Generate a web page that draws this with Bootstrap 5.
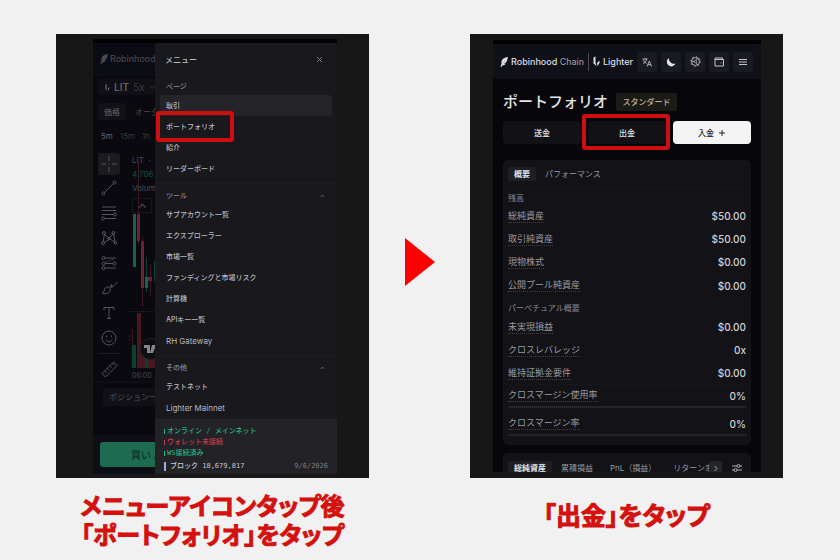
<!DOCTYPE html>
<html lang="ja">
<head>
<meta charset="utf-8">
<meta name="viewport" content="width=device-width, initial-scale=1">
<title>出金手順</title>
<link href="https://cdn.jsdelivr.net/npm/bootstrap@5.3.0/dist/css/bootstrap.min.css" rel="stylesheet">
<style>
body{background:#f1f1f1;font-family:Inter,"Noto Sans CJK JP",sans-serif;font-size:8px;line-height:12px;color:#c4c4c9}
button{font-family:inherit;color:inherit;background:none;border:0;padding:0;white-space:nowrap}
svg{display:block;flex:none}
.steps{padding:34px 57px 0 56px}
.step{flex:1 1 0;min-width:0}
.shot{background:#171717}
.shot-menu{padding:5px 32px 4px 37px}
.shot-folio{padding:6px 22px 6px 23px}
.pane{background:#06060b;position:relative;overflow:hidden;white-space:nowrap}
.caption{color:#d4110f;font:700 24px/29px "Noto Sans CJK JP",sans-serif;font-feature-settings:"palt";-webkit-text-stroke:1px #d4110f;white-space:nowrap;text-align:center}
.caption-menu{padding-top:12px}
.caption-folio{padding-top:22px;font-size:25px}
.arrow-col{width:101px;padding-top:204px}
.ring{position:absolute;border:4px solid #cc0f10;border-radius:3px;pointer-events:none}
.strip{height:4px;background:#020205}

/* dimmed trading screen */
.trade{color:#4b4c52;background:#09090f}
.trade-head{height:32px;background:#0b0c13;border-bottom:1px solid #11121a;padding-left:7px;font-size:9px;gap:2px}
.pair{height:16px;width:58px;background:#0f0f15;border-radius:3px;margin:4px 0 8px 5px;padding-left:7px;gap:4px;font-size:10px;font-weight:600;color:#606066}
.pair span{font-weight:400;color:#3a3a40}
.chart-tabs{margin-left:5px;gap:9px;height:17px}
.chart-tabs button{height:17px}
.chart-tabs .on{width:28px;background:#111117;border-radius:3px;color:#66666c}
.frames{padding-left:8px;gap:7px;height:32px;color:#38383e}
.frames .on{color:#66666c}
.chart{padding:1px 0 0 1px}
.tools{width:35px;padding-left:4px;color:#55555b;gap:5px}
.tools button{width:22px;height:20px;display:grid;place-items:center}
.tools .cross{height:22px;background:#1a1a1f;border-radius:3px;margin-bottom:-2px}
.tools hr{width:22px;margin:0;border-color:#54545b}
.plot{min-width:0;position:relative;height:228px}
.plot .candles{position:absolute;left:0;top:0}
.legend{position:relative;padding:0 0 0 3px;line-height:14px}
.legend .gain{color:#0e4f3e}
.fold{position:relative;width:20px;height:15px;border:1px solid #17171d;margin:3px 0 0 3px;display:grid;place-items:center}
.hour{position:absolute;left:3px;top:218px;line-height:10px;font-size:7px}
.positions{border-top:2px solid #0d0e15;height:54px;padding:5px 0 0 10px}
.positions button{height:18px;padding-left:6px;background:#101016;border-radius:3px;width:80px;text-align:left;color:#55555b}
.order{background:#0d0e16;height:39px;padding:7px}
.order button{height:25px;width:100%;background:#1d6b50;border-radius:3px;color:#0d3427;font-size:10px;font-weight:500;text-align:left;padding-left:31px}

/* drawer */
.drawer{position:absolute;top:0;bottom:0;right:0;width:182px;background:#18181d;color:#b8b8bd;font-size:7px;font-weight:500}
.drawer-head{height:33px;padding:1px 14px 0 10px;font-size:8px;border-bottom:1px solid #1c1c22}
.group-name{height:18px;padding:2px 12px 0 11px;color:#8e8e94}
.group-name.first{height:19px;padding-top:3px}
.drawer a{display:flex;align-items:center;height:21px;margin:0 5px;padding-left:6px;border-radius:3px;color:inherit;text-decoration:none;position:relative}
.drawer a.on{background:#242429}
.drawer a.latin{font-size:8px;font-weight:400}
.drawer .ring{inset:-5px auto -5px -4px;width:78px}
.group{border-bottom:1px solid #1d1d23}
.group+.group{padding-top:2px}
.status{background:#222227;font-family:"DejaVu Sans Mono","Noto Sans CJK JP",monospace;font-size:7px;line-height:11px;padding:7px 9px 0 9px}
.status .tick{width:1px;height:5px;background:currentColor;margin-right:2px}
.up{color:#2bb585}
.down{color:#c2404f}
.block-row{height:15px;color:#c8c8dc}
.block-row .tick{width:2px;height:9px;margin-right:4px;background:#a4a5e8}
.block-row .day{color:#7c7c82}

/* portfolio screen */
.folio-head{height:35px;background:#0f1018;padding:0 8px 0 7px}
.brand{font-size:9px;font-weight:500;color:#dedee1;gap:3px}
.brand .thin{font-weight:400;color:#a2a2a8}
.rule{width:1px;height:18px;background:#4a4a50}
.tool{width:20px;height:20px;background:#1a1a21;border-radius:3px;display:grid;place-items:center;color:#c2c2c7}
.folio{padding:13px 10px 0}
.folio h1{font-size:15px;line-height:20px;font-weight:500;color:#e4e4e7;margin:0}
.tier{background:#1b1a17;color:#bcb391;border-radius:2px;height:18px;width:61px;display:grid;place-items:center;font-weight:500}
.actions{gap:7px;margin-top:9px;margin-bottom:16px}
.actions>div{flex:1;position:relative}
.actions button{width:100%;height:23px;background:#111116;border-radius:4px;color:#e2e2e5;font-weight:500}
.actions .deposit{background:#f4f4f4;color:#222}
.actions .ring{inset:-7px -4px -6px -6px}
.sheet{background:#121217;border-radius:5px;padding:7px 5px 0}
.tabs{gap:9px}
.tabs button{height:14px;color:#98989e}
.tabs .on{background:#1e1e23;border-radius:2px;padding:0 6px;color:#e4e4e7;font-weight:700}
.summary{padding-bottom:9px;margin-bottom:8px}
.summary .tabs{padding-bottom:6px;margin:0 -5px;padding-left:5px;border-bottom:1px solid #17171c}
.summary h2{font-size:8px;line-height:12px;font-weight:400;color:#88888e;margin:4px 0 0;height:13px}
.summary dl{margin:0}
.summary dl+h2{margin-top:5px;height:14px}
.fact{height:23px;border-bottom:1px solid #16161b}
.fact dt{font-size:9px;line-height:12px;font-weight:400;color:#9a9aa0;border-bottom:1px dotted #3f3f45}
.fact dd{font-size:10px;line-height:14px;font-weight:500;color:#cfcfd3;margin:0}
.fact.metered{border:0;height:21px}
.meter{height:2px;background:#242429;border-radius:1px;margin-bottom:5px}
.assets{height:19px;border-radius:5px 5px 0 0;padding-top:8px;overflow:hidden}
.assets .tabs button{flex:none}
.assets .clip{width:38px;overflow:hidden;text-align:left}
.assets .next{width:13px;height:14px;background:#242429;border-radius:2px;display:grid;place-items:center;margin-left:-11px}
</style>
<script src="https://cdn.jsdelivr.net/npm/bootstrap@5.3.0/dist/js/bootstrap.bundle.min.js"></script>
</head>
<body>
<svg width="0" height="0" class="position-absolute" aria-hidden="true">
  <symbol id="feather" viewBox="0 0 16 20"><path fill="currentColor" d="M1 20C2 13 6 8 12 4 8 9 5 13 3 20zM3 12C2 6 7 1 16 0c-1 5-2 8-4 11l-5 3 5-1c-2 3-5 4-8 4 1-3 3-6 6-10-4 3-6 6-7 10z"/></symbol>
  <symbol id="lighter" viewBox="0 0 14 20"><path fill="currentColor" d="M1 2l4-2v12l2 7-6-5zM8 13l5-5v5l-4 6z"/></symbol>
  <symbol id="up" viewBox="0 0 8 5"><path d="M1 4l3-3 3 3" fill="none" stroke="currentColor"/></symbol>
</svg>
<main class="steps d-flex align-items-start">
  <figure class="step m-0">
    <div class="shot shot-menu">
      <div class="pane trade">
        <div class="strip"></div>
        <div class="trade-head d-flex align-items-center"><svg width="8" height="10"><use href="#feather"/></svg>Robinhood C</div>
        <button class="pair d-flex align-items-center"><svg width="5" height="7"><use href="#lighter"/></svg>LIT <span>5x</span><svg width="7" height="4" viewBox="0 0 8 5"><path d="M1 1l3 3 3-3" fill="none" stroke="#44444a"/></svg></button>
        <div class="chart-tabs d-flex"><button class="on">価格</button><button>オーダー</button></div>
        <div class="frames d-flex align-items-center"><button class="on">5m</button><button>15m</button><button>1h</button></div>
        <div class="chart d-flex">
          <div class="tools d-flex flex-column">
            <button class="cross" aria-label="十字カーソル"><svg width="16" height="16" viewBox="0 0 16 16" stroke="currentColor"><path d="M8 0v5M8 11v5M0 8h5M11 8h5M8 7.500v1"/></svg></button>
            <button aria-label="線"><svg width="16" height="16" viewBox="0 0 16 16" fill="none" stroke="currentColor"><path d="M3.500 12.500l9-9"/><circle cx="2.500" cy="13.500" r="1.500"/><circle cx="13.500" cy="2.500" r="1.500"/></svg></button>
            <button aria-label="フィボナッチ"><svg width="18" height="16" viewBox="0 0 18 16" fill="none" stroke="currentColor"><path d="M2 2h14M2 5.500h14M2 9.500h11M5 13.500h11"/><circle cx="15" cy="9.500" r="1.500"/><circle cx="3" cy="13.500" r="1.500"/></svg></button>
            <button aria-label="パターン"><svg width="16" height="16" viewBox="0 0 16 16" fill="none" stroke="currentColor"><path d="M2 12L3.500 4l4 4.500 5-5 1.500 9-5-3.500-6 3.500"/><circle cx="2" cy="13" r="1.500"/><circle cx="3" cy="3" r="1.500"/><circle cx="8" cy="8.500" r="1.300"/><circle cx="12.500" cy="3" r="1.500"/><circle cx="14.500" cy="13" r="1.300"/></svg></button>
            <button aria-label="予測"><svg width="16" height="16" viewBox="0 0 16 16" fill="none" stroke="currentColor"><path d="M4 3h11M4 8.500h8M4 13h11"/><circle cx="2.500" cy="3" r="1.500"/><circle cx="2.500" cy="8.500" r="1.500"/><circle cx="2.500" cy="13" r="1.500"/><circle cx="13.500" cy="8.500" r="1.500"/><path stroke-dasharray="1 1" d="M5 7l8-3"/></svg></button>
            <button aria-label="ブラシ"><svg width="17" height="15" viewBox="0 0 17 15" fill="none" stroke="currentColor"><path d="M1 12c3 0 1-6 6-6 3 1 3 5 0 6-2 1-4 1-6 0zM9 6l2-3c-2 3 1 5 5-2M9 7l3-2"/></svg></button>
            <button aria-label="テキスト"><svg width="14" height="14" viewBox="0 0 14 14" fill="none" stroke="currentColor"><path d="M2 4V1.500h10V4M7 1.500v11M5 12.500h4"/></svg></button>
            <button aria-label="絵文字"><svg width="16" height="16" viewBox="0 0 16 16" fill="none" stroke="currentColor"><circle cx="8" cy="8" r="7"/><path d="M5 9.500c1 3 5 3 6 0M5.500 5.500v1.500M10.500 5.500v1.500"/></svg></button>
            <hr>
            <button aria-label="定規"><svg width="17" height="17" viewBox="0 0 17 17" fill="none" stroke="currentColor"><path d="M1 12.500L12.500 1 16 4.500 4.500 16zM4 10l1.500 1.500M6.500 7.500L8 9M9 5l1.500 1.500M11.500 2.500L13 4"/></svg></button>
          </div>
          <div class="plot flex-fill">
            <svg class="candles" width="60" height="220" viewBox="129 152 60 220">
              <path d="M138.500 160v55M138.500 240v3M142.500 236v70M150.500 264v31M132.500 328v39" stroke="#4b1c27" stroke-width=".8"/>
              <path d="M146.500 256v35M154.500 260v20" stroke="#174f3f" stroke-width=".8"/>
              <path fill="#1a644c" d="M133 213h3v53h-3zM145 276h3v11h-3z"/>
              <path fill="#6a222f" d="M137 213h3v27h-3zM141 240h3v47h-3zM148 276h4v4h-4z"/>
              <path d="M129 310.500h30" stroke="#24242a" stroke-dasharray="1 1"/>
              <path fill="#461820" d="M137 312h4v55h-4zM141 343h4v24h-4zM148 358h12v9h-12z"/>
              <path fill="#0e4032" d="M132 344h4v23h-4zM145 357h3v10h-3z"/>
              <path d="M130 334.500l-2 2.500 2 2.500" fill="none" stroke="#44444a"/>
              <circle cx="150.500" cy="348" r="10.500" fill="#0d0d12" stroke="#222228"/>
              <path fill="#85858b" d="M144 344h6v8h-3v-5h-3zM152 344h4l-3 8h-3z"/>
            </svg>
            <div class="legend"><div>LIT &nbsp;·</div><div class="gain">4.706</div><div>Volum</div></div>
            <button class="fold" aria-label="折りたたむ"><svg width="9" height="6"><use href="#up"/></svg></button>
            <div class="hour">06:00</div>
          </div>
        </div>
        <div class="positions"><button>ポジション一</button></div>
        <div class="order"><button>買い /</button></div>
        <nav class="drawer d-flex flex-column" aria-label="メニュー">
          <div class="strip"></div>
          <div class="drawer-head d-flex justify-content-between align-items-center">メニュー<button aria-label="閉じる"><svg width="7" height="7" viewBox="0 0 7 7" stroke="#77777d"><path d="M1 1l5 5M6 1L1 6"/></svg></button></div>
          <div class="group pb-1">
            <div class="group-name first d-flex align-items-center">ページ</div>
            <a href="#" class="on">取引</a>
            <a href="#">ポートフォリオ<span class="ring"></span></a>
            <a href="#">紹介</a>
            <a href="#">リーダーボード</a>
          </div>
          <div class="group pb-1">
            <div class="group-name d-flex align-items-center justify-content-between">ツール<svg width="5" height="4"><use href="#up"/></svg></div>
            <a href="#">サブアカウント一覧</a>
            <a href="#">エクスプローラー</a>
            <a href="#">市場一覧</a>
            <a href="#">ファンディングと市場リスク</a>
            <a href="#">計算機</a>
            <a href="#">APIキー一覧</a>
            <a href="#" class="latin">RH Gateway</a>
          </div>
          <div class="group border-0">
            <div class="group-name d-flex align-items-center justify-content-between">その他<svg width="5" height="4"><use href="#up"/></svg></div>
            <a href="#">テストネット</a>
            <a href="#" class="latin">Lighter Mainnet</a>
          </div>
          <div class="status mt-auto">
            <div class="d-flex align-items-center up"><span class="tick"></span>オンライン / メインネット</div>
            <div class="d-flex align-items-center down"><span class="tick"></span>ウォレット未接続</div>
            <div class="d-flex align-items-center up"><span class="tick"></span>WS接続済み</div>
            <div class="block-row d-flex align-items-center"><span class="tick"></span>ブロック 18,679,817<span class="day ms-auto">9/6/2026</span></div>
          </div>
        </nav>
      </div>
    </div>
    <figcaption class="caption caption-menu">メニューアイコンタップ後<br>「ポートフォリオ」をタップ</figcaption>
  </figure>
  <div class="arrow-col d-flex justify-content-center"><svg width="30" height="48" viewBox="0 0 30 48"><path d="M0 0l30 24L0 48z" fill="#f00"/></svg></div>
  <figure class="step m-0">
    <div class="shot shot-folio">
      <div class="pane">
        <div class="strip"></div>
        <header class="folio-head d-flex align-items-center justify-content-between">
          <div class="brand d-flex align-items-center"><svg width="8" height="10"><use href="#feather"/></svg><span>Robinhood <span class="thin">Chain</span></span></div>
          <span class="rule"></span>
          <div class="brand d-flex align-items-center"><svg width="7" height="11"><use href="#lighter"/></svg>Lighter</div>
          <div class="d-flex gap-1">
            <button class="tool" aria-label="言語"><svg width="10" height="10" viewBox="0 0 10 10" fill="none" stroke="currentColor" stroke-width=".9"><path d="M.5 2h5M3 1v1M1 6.500C3.500 5.500 4.500 4 4.500 2M1.500 3c.5 1.500 1.500 2.500 3 3.300M5 9.500L7.300 4l2.200 5.500M6 7.700h2.700"/></svg></button>
            <button class="tool" aria-label="テーマ"><svg width="10" height="10" viewBox="0 0 10 10"><path d="M3 1a5 5 0 0 0 6.500 5.500A4.500 4.500 0 1 1 3 1z" fill="#e4e4e8"/></svg></button>
            <button class="tool" aria-label="設定"><svg width="11" height="11" viewBox="0 0 22 22" fill="none" stroke="currentColor"><circle cx="11" cy="11" r="8" stroke-width="1.800"/><circle cx="11" cy="11" r="2.500" stroke-width="1.500"/><circle cx="11" cy="11" r="9.700" stroke-width="1.800" stroke-dasharray="2.500 5.100"/><path stroke-width="1.500" d="M3 11h5.500M12.300 8.800L15 4.100M12.300 13.200L15 17.900"/></svg></button>
            <button class="tool" aria-label="ウォレット"><svg width="10" height="10" viewBox="0 0 10 10" fill="none" stroke="currentColor"><path d="M8.500 2.500V1H1v8h8.500V2.500H1M7 5.500v1"/></svg></button>
            <button class="tool" aria-label="メニュー"><svg width="8" height="8" viewBox="0 0 8 8" stroke="currentColor"><path d="M0 1.500h8M0 4h8M0 6.500h8"/></svg></button>
          </div>
        </header>
        <div class="folio">
          <div class="d-flex align-items-center gap-2"><h1>ポートフォリオ</h1><span class="tier">スタンダード</span></div>
          <div class="actions d-flex">
            <div><button>送金</button></div>
            <div><button>出金</button><span class="ring"></span></div>
            <div><button class="deposit d-flex align-items-center justify-content-center gap-1">入金<svg width="8" height="8" viewBox="0 0 8 8" stroke="#222"><path d="M4 1v6M1 4h6"/></svg></button></div>
          </div>
          <section class="sheet summary">
            <div class="tabs d-flex"><button class="on">概要</button><button>パフォーマンス</button></div>
            <h2>残高</h2>
            <dl>
              <div class="fact d-flex align-items-center justify-content-between"><dt>総純資産</dt><dd>$50.00</dd></div>
              <div class="fact d-flex align-items-center justify-content-between"><dt>取引純資産</dt><dd>$50.00</dd></div>
              <div class="fact d-flex align-items-center justify-content-between"><dt>現物株式</dt><dd>$0.00</dd></div>
              <div class="fact d-flex align-items-center justify-content-between border-0"><dt>公開プール純資産</dt><dd>$0.00</dd></div>
            </dl>
            <h2>パーペチュアル概要</h2>
            <dl>
              <div class="fact d-flex align-items-center justify-content-between"><dt>未実現損益</dt><dd>$0.00</dd></div>
              <div class="fact d-flex align-items-center justify-content-between"><dt>クロスレバレッジ</dt><dd>0x</dd></div>
              <div class="fact d-flex align-items-center justify-content-between"><dt>維持証拠金要件</dt><dd>$0.00</dd></div>
              <div class="fact metered d-flex align-items-center justify-content-between"><dt>クロスマージン使用率</dt><dd>0%</dd></div>
            </dl>
            <div class="meter"></div>
            <dl><div class="fact metered d-flex align-items-center justify-content-between"><dt>クロスマージン率</dt><dd>0%</dd></div></dl>
            <div class="meter mb-0"></div>
          </section>
          <section class="sheet assets d-flex justify-content-between">
            <div class="tabs d-flex"><button class="on">総純資産</button><button>累積損益</button><button class="ms-2">PnL（損益）</button><button class="clip ms-2">リターン率</button><button class="next" aria-label="次へ"><svg width="4" height="7" viewBox="0 0 4 7" fill="none" stroke="#aaa"><path d="M.5 1L3 3.500.5 6"/></svg></button></div>
            <button class="align-self-start me-1" aria-label="絞り込み"><svg width="10" height="14" viewBox="0 0 10 14" fill="none" stroke="#b5b5ba"><path d="M0 5h5M8 5h2M0 9h2M5 9h5"/><circle cx="6.500" cy="5" r="1.500"/><circle cx="3.500" cy="9" r="1.500"/></svg></button>
          </section>
        </div>
      </div>
    </div>
    <figcaption class="caption caption-folio">「出金」をタップ</figcaption>
  </figure>
</main>
</body>
</html>
